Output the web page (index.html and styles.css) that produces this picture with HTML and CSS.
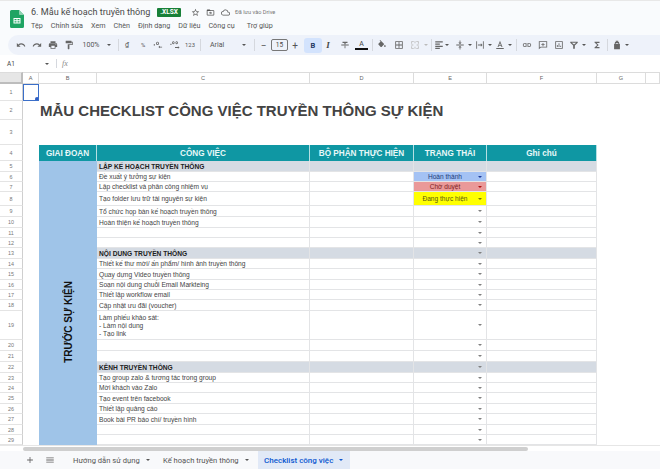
FILE: index.html
```html
<!DOCTYPE html>
<html lang="vi">
<head>
  <meta charset="UTF-8">
  <meta name="viewport" content="width=device-width, initial-scale=1.0">
  <title>6. Mẫu kế hoạch truyền thông</title>
  <link rel="stylesheet" href="styles.css">
</head>
<body>
  <svg class="sprite" aria-hidden="true">
    <symbol id="i-undo" viewBox="0 0 24 24"><path d="M12.5 8c-2.65 0-5.05.99-6.9 2.6L2 7v9h9l-3.62-3.62c1.39-1.16 3.16-1.88 5.12-1.88 3.54 0 6.55 2.31 7.6 5.5l2.37-.78C21.08 11.03 17.15 8 12.5 8z"/></symbol>
    <symbol id="i-redo" viewBox="0 0 24 24"><path d="M18.4 10.6C16.55 8.99 14.15 8 11.5 8c-4.65 0-8.58 3.03-9.96 7.22L3.9 16c1.05-3.19 4.05-5.5 7.6-5.5 1.95 0 3.73.72 5.12 1.88L13 16h9V7l-3.6 3.6z"/></symbol>
    <symbol id="i-print" viewBox="0 0 24 24"><path d="M19 8H5c-1.66 0-3 1.34-3 3v6h4v4h12v-4h4v-6c0-1.66-1.34-3-3-3zm-3 11H8v-5h8v5zm3-7c-.55 0-1-.45-1-1s.45-1 1-1 1 .45 1 1-.45 1-1 1zm-1-9H6v4h12V3z"/></symbol>
    <symbol id="i-paint" viewBox="0 0 24 24"><path d="M18 4V3c0-.55-.45-1-1-1H5c-.55 0-1 .45-1 1v4c0 .55.45 1 1 1h12c.55 0 1-.45 1-1V6h1v4H9v11c0 .55.45 1 1 1h2c.55 0 1-.45 1-1v-9h8V4h-3z"/></symbol>
    <symbol id="i-star" viewBox="0 0 24 24"><path d="M22 9.24l-7.19-.62L12 2 9.19 8.63 2 9.24l5.46 4.73L5.82 21 12 17.27 18.18 21l-1.63-7.03L22 9.24zM12 15.4l-3.76 2.27 1-4.28-3.32-2.88 4.38-.38L12 6.1l1.71 4.04 4.38.38-3.32 2.88 1 4.28L12 15.4z"/></symbol>
    <symbol id="i-folder" viewBox="0 0 24 24"><path d="M20 6h-8l-2-2H4c-1.1 0-2 .9-2 2v12c0 1.1.9 2 2 2h16c1.1 0 2-.9 2-2V8c0-1.1-.9-2-2-2zm0 12H4V8h16v10zM12 9.5l4 3.5-4 3.5V14H8v-2h4V9.5z"/></symbol>
    <symbol id="i-cloud" viewBox="0 0 24 24"><path d="M19.35 10.04C18.67 6.59 15.64 4 12 4 9.11 4 6.6 5.64 5.35 8.04 2.34 8.36 0 10.91 0 14c0 3.31 2.69 6 6 6h13c2.76 0 5-2.24 5-5 0-2.64-2.05-4.78-4.65-4.96zM19 18H6c-2.21 0-4-1.79-4-4s1.79-4 4-4h.71C7.37 7.69 9.48 6 12 6c3.04 0 5.5 2.46 5.5 5.5v.5H19c1.66 0 3 1.34 3 3s-1.34 3-3 3z"/></symbol>
    <symbol id="i-dec-less" viewBox="0 0 24 24"><path d="M3 10h3v3H3zM12 4a3.5 4 0 1 0 .01 0zM12 6a1.5 2 0 1 1-.01 0zM14 17l4-3v2h5v2h-5v2z"/></symbol>
    <symbol id="i-dec-more" viewBox="0 0 24 24"><path d="M1 9h2.500v3H1zM8 3a3 3.500 0 1 0 .01 0zM8 5a1 1.500 0 1 1-.01 0zM16 3a3 3.500 0 1 0 .01 0zM16 5a1 1.500 0 1 1-.01 0zM23 18l-4-3v2h-7v2h7v2z"/></symbol>
    <symbol id="i-strike" viewBox="0 0 24 24"><path d="M3 11h18v2H3zM11 14h2v6h-2zM6 4h12v3h-4.500v3h-3V7H6z"/></symbol>
    <symbol id="i-fill" viewBox="0 0 24 24"><path d="M16.560 8.940 7.620 0 6.210 1.410l2.380 2.380-5.150 5.150c-.590.590-.590 1.540 0 2.120l5.500 5.500c.290.290.680.440 1.060.440s.770-.150 1.060-.440l5.500-5.500c.590-.580.590-1.530 0-2.120zM19 11.500s-2 2.170-2 3.500c0 1.100.900 2 2 2s2-.900 2-2c0-1.330-2-3.500-2-3.500z"/></symbol>
    <symbol id="i-borders" viewBox="0 0 24 24"><path d="M3 3v18h18V3H3zm8 16H5v-6h6v6zm0-8H5V5h6v6zm8 8h-6v-6h6v6zm0-8h-6V5h6v6z"/></symbol>
    <symbol id="i-merge" viewBox="0 0 24 24"><path d="M3 3h6v2H5v4H3zM15 3h6v6h-2V5h-4zM3 15h2v4h4v2H3zM19 15h2v6h-6v-2h4zM11 3h2v5h-2zM11 16h2v5h-2zM3 11h5v2H3zM16 11h5v2h-5z"/></symbol>
    <symbol id="i-align" viewBox="0 0 24 24"><path d="M3 3h18v3H3zM3 8.500h11v3H3zM3 13.500h18v3H3zM3 18.500h11v3H3z"/></symbol>
    <symbol id="i-valign" viewBox="0 0 24 24"><path d="M3 11h18v2H3zM8 6h3V1h2v5h3l-4 4zM8 18h3v5h2v-5h3l-4-4z"/></symbol>
    <symbol id="i-wrap" viewBox="0 0 24 24"><path d="M3 3h2v18H3zM19 3h2v18h-2zM7 11h7V8l4 4-4 4v-3H7z"/></symbol>
    <symbol id="i-rotate" viewBox="0 0 24 24"><path d="M12 2 6 17h2.300l1.200-3h5l1.200 3H18L12 2zm-1.700 10L12 7l1.700 5h-3.400zM3 19h18v2.500H3z"/></symbol>
    <symbol id="i-link" viewBox="0 0 24 24"><path d="M3.900 12c0-1.710 1.390-3.100 3.100-3.100h4V7H7c-2.760 0-5 2.240-5 5s2.240 5 5 5h4v-1.900H7c-1.710 0-3.100-1.390-3.100-3.100zM8 13h8v-2H8v2zm9-6h-4v1.900h4c1.710 0 3.100 1.390 3.100 3.100s-1.390 3.100-3.100 3.100h-4V17h4c2.760 0 5-2.240 5-5s-2.240-5-5-5z"/></symbol>
    <symbol id="i-comment" viewBox="0 0 24 24"><path d="M2 3h20v15H7l-5 4V3zm2 2v12.800L6.300 16H20V5H4zm7 2h2v3h3v2h-3v3h-2v-3H8v-2h3z"/></symbol>
    <symbol id="i-chart" viewBox="0 0 24 24"><path d="M3 3h18v18H3V3zm2 2v14h14V5H5zm2 7h2v5H7zm4-4h2v9h-2zm4 6h2v3h-2z"/></symbol>
    <symbol id="i-filter" viewBox="0 0 24 24"><path d="M3 4h18v2.500L14 13v8h-4v-8L3 6.500V4zm3.800 2.500L12 11l5.200-4.500H6.800z"/></symbol>
    <symbol id="i-sigma" viewBox="0 0 24 24"><path d="M18 4H6v2l6.500 6L6 18v2h12v-3h-7l5-5-5-5h7z"/></symbol>
    <symbol id="i-lock" viewBox="0 0 24 24"><path d="M9 2h6v3h2v4h2v13H5V9h2V5h2V2zm2 2v1h2V4h-2zm-2 3v2h6V7H9z"/></symbol>
    <symbol id="i-plus" viewBox="0 0 24 24"><path d="M19 13h-6v6h-2v-6H5v-2h6V5h2v6h6v2z"/></symbol>
    <symbol id="i-menu" viewBox="0 0 24 24"><path d="M3 6h18v2H3zM3 11h18v2H3zM3 16h18v2H3z"/></symbol>
  </svg>

  <header class="titlebar">
    <svg class="logo" viewBox="0 0 14 18">
      <path d="M1.500 0H9l5 5v11.500a1.500 1.500 0 0 1-1.500 1.500h-11A1.500 1.500 0 0 1 0 16.500v-15A1.500 1.500 0 0 1 1.500 0z" fill="#1fa463"/>
      <path d="M9 0l5 5H10a1 1 0 0 1-1-1z" fill="#8ed1b1"/>
      <path d="M3.500 8h7v5.500h-7zM4.500 9v1.200h2V9zm3 0v1.200h2V9zm-3 2.200v1.300h2v-1.300zm3 0v1.300h2v-1.300z" fill="#fff" fill-rule="evenodd"/>
    </svg>
    <div class="titlebar-main">
      <div class="doc-row">
        <span class="doc-name">6. Mẫu kế hoạch truyền thông</span>
        <span class="badge">.XLSX</span>
        <svg class="doc-icon star"><use href="#i-star"/></svg>
        <svg class="doc-icon"><use href="#i-folder"/></svg>
        <svg class="doc-icon"><use href="#i-cloud"/></svg>
        <span class="saved">Đã lưu vào Drive</span>
      </div>
      <nav class="menu">
        <span>Tệp</span><span>Chỉnh sửa</span><span>Xem</span><span>Chèn</span><span>Định dạng</span><span>Dữ liệu</span><span class="tools">Công cụ</span><span>Trợ giúp</span>
      </nav>
    </div>
  </header>

  <div class="toolbar">
    <svg class="tb"><use href="#i-undo"/></svg>
    <svg class="tb"><use href="#i-redo"/></svg>
    <svg class="tb"><use href="#i-print"/></svg>
    <svg class="tb"><use href="#i-paint"/></svg>
    <span class="tb-text zoom-val">100%</span><i class="caret"></i>
    <i class="sep sep-zoom"></i>
    <span class="tb-text cell16">₫</span>
    <span class="tb-text cell16 small">%</span>
    <svg class="tb w13"><use href="#i-dec-less"/></svg>
    <svg class="tb w18 ml2"><use href="#i-dec-more"/></svg>
    <span class="tb-text small w12">123</span>
    <i class="sep sep-num"></i>
    <span class="tb-text font-name">Arial</span><i class="caret"></i>
    <i class="sep sep-font"></i>
    <span class="tb-text step-minus">−</span>
    <span class="size-box">15</span>
    <span class="tb-text step-plus">+</span>
    <span class="bold-btn">B</span>
    <span class="italic-btn">I</span>
    <svg class="tb ml3"><use href="#i-strike"/></svg>
    <span class="text-color">A</span>
    <i class="sep sep-num"></i>
    <svg class="tb w10"><use href="#i-fill"/></svg>
    <svg class="tb ml4"><use href="#i-borders"/></svg>
    <svg class="tb faint"><use href="#i-merge"/></svg><i class="caret faint-caret"></i>
    <i class="sep sep-tight"></i>
    <svg class="tb w10"><use href="#i-align"/></svg><i class="caret"></i>
    <svg class="tb w14 ml3"><use href="#i-valign"/></svg><i class="caret"></i>
    <svg class="tb w14"><use href="#i-wrap"/></svg><i class="caret"></i>
    <svg class="tb w14"><use href="#i-rotate"/></svg><i class="caret"></i>
    <i class="sep sep-align"></i>
    <svg class="tb w14"><use href="#i-link"/></svg>
    <svg class="tb ml1"><use href="#i-comment"/></svg>
    <svg class="tb"><use href="#i-chart"/></svg>
    <svg class="tb w14"><use href="#i-filter"/></svg><i class="caret"></i>
    <svg class="tb ml2"><use href="#i-sigma"/></svg>
    <i class="sep sep-tight"></i>
    <svg class="tb w14"><use href="#i-lock"/></svg><i class="caret"></i>
  </div>

  <div class="formula-bar">
    <span class="name-box">A1</span><i class="caret"></i>
    <i class="sep"></i>
    <span class="fx">fx</span>
  </div>

  <div class="sheet">
    <table>
      <colgroup>
        <col class="c-head"><col class="c-a"><col class="c-b"><col class="c-c"><col class="c-d"><col class="c-e"><col class="c-f"><col class="c-g"><col class="c-h">
      </colgroup>
      <tr class="col-heads">
        <th class="corner"></th><th>A</th><th>B</th><th>C</th><th>D</th><th>E</th><th>F</th><th>G</th><th></th>
      </tr>
      <tr class="h17"><th class="rh">1</th><td class="selected"></td><td colspan="7"></td></tr>
      <tr class="h19"><th class="rh">2</th><td></td><td colspan="7" class="title">MẪU CHECKLIST CÔNG VIỆC TRUYỀN THÔNG SỰ KIỆN</td></tr>
      <tr class="h25"><th class="rh">3</th><td colspan="8"></td></tr>
      <tr class="h16 heading">
        <th class="rh">4</th><td class="blank"></td>
        <td>GIAI ĐOẠN</td><td>CÔNG VIỆC</td><td>BỘ PHẬN THỰC HIỆN</td><td>TRẠNG THÁI</td><td>Ghi chú</td>
        <td class="blank" colspan="2"></td>
      </tr>
      <tr class="h11 section">
        <th class="rh">5</th><td class="blank"></td>
        <td class="phase" rowspan="25"><span>TRƯỚC SỰ KIỆN</span></td>
        <td class="job">LẬP KẾ HOẠCH TRUYỀN THÔNG</td><td></td><td></td><td></td><td class="blank" colspan="2"></td>
      </tr>
      <tr class="h10"><th class="rh">6</th><td class="blank"></td><td class="job">Đề xuất ý tưởng sự kiện</td><td></td><td class="st done"><div class="pick"><span>Hoàn thành</span></div></td><td></td><td class="blank" colspan="2"></td></tr>
      <tr class="h10"><th class="rh">7</th><td class="blank"></td><td class="job">Lập checklist và phân công nhiệm vụ</td><td></td><td class="st wait"><div class="pick"><span>Chờ duyệt</span></div></td><td></td><td class="blank" colspan="2"></td></tr>
      <tr class="h14"><th class="rh">8</th><td class="blank"></td><td class="job">Tạo folder lưu trữ tài nguyên sự kiện</td><td></td><td class="st doing"><div class="pick"><span>Đang thực hiện</span></div></td><td></td><td class="blank" colspan="2"></td></tr>
      <tr class="h11"><th class="rh">9</th><td class="blank"></td><td class="job">Tổ chức họp bàn kế hoạch truyền thông</td><td></td><td class="st"><div class="pick"></div></td><td></td><td class="blank" colspan="2"></td></tr>
      <tr class="h11"><th class="rh">10</th><td class="blank"></td><td class="job">Hoàn thiện kế hoạch truyền thông</td><td></td><td class="st"><div class="pick"></div></td><td></td><td class="blank" colspan="2"></td></tr>
      <tr class="h10"><th class="rh">11</th><td class="blank"></td><td class="job"></td><td></td><td class="st"><div class="pick"></div></td><td></td><td class="blank" colspan="2"></td></tr>
      <tr class="h10"><th class="rh">12</th><td class="blank"></td><td class="job"></td><td></td><td class="st"><div class="pick"></div></td><td></td><td class="blank" colspan="2"></td></tr>
      <tr class="h11 section"><th class="rh">13</th><td class="blank"></td><td class="job">NỘI DUNG TRUYỀN THÔNG</td><td></td><td class="st"><div class="pick"></div></td><td></td><td class="blank" colspan="2"></td></tr>
      <tr class="h10"><th class="rh">14</th><td class="blank"></td><td class="job">Thiết kế thư mời/ ấn phẩm/ hình ảnh truyền thông</td><td></td><td class="st"><div class="pick"></div></td><td></td><td class="blank" colspan="2"></td></tr>
      <tr class="h11"><th class="rh">15</th><td class="blank"></td><td class="job">Quay dựng Video truyền thông</td><td></td><td class="st"><div class="pick"></div></td><td></td><td class="blank" colspan="2"></td></tr>
      <tr class="h10"><th class="rh">16</th><td class="blank"></td><td class="job">Soạn nội dung chuỗi Email Markteing</td><td></td><td class="st"><div class="pick"></div></td><td></td><td class="blank" colspan="2"></td></tr>
      <tr class="h10"><th class="rh">17</th><td class="blank"></td><td class="job">Thiết lập workflow email</td><td></td><td class="st"><div class="pick"></div></td><td></td><td class="blank" colspan="2"></td></tr>
      <tr class="h11"><th class="rh">18</th><td class="blank"></td><td class="job">Cập nhật ưu đãi (voucher)</td><td></td><td class="st"><div class="pick"></div></td><td></td><td class="blank" colspan="2"></td></tr>
      <tr class="h29"><th class="rh">19</th><td class="blank"></td><td class="job multi">Làm phiếu khảo sát:<br>- Làm nội dung<br>- Tạo link</td><td></td><td class="st"><div class="pick"></div></td><td></td><td class="blank" colspan="2"></td></tr>
      <tr class="h11"><th class="rh">20</th><td class="blank"></td><td class="job"></td><td></td><td class="st"><div class="pick"></div></td><td></td><td class="blank" colspan="2"></td></tr>
      <tr class="h11"><th class="rh">21</th><td class="blank"></td><td class="job"></td><td></td><td class="st"><div class="pick"></div></td><td></td><td class="blank" colspan="2"></td></tr>
      <tr class="h11 section"><th class="rh">22</th><td class="blank"></td><td class="job">KÊNH TRUYỀN THÔNG</td><td></td><td class="st"><div class="pick"></div></td><td></td><td class="blank" colspan="2"></td></tr>
      <tr class="h10"><th class="rh">23</th><td class="blank"></td><td class="job">Tạo group zalo &amp; tương tác trong group</td><td></td><td class="st"><div class="pick"></div></td><td></td><td class="blank" colspan="2"></td></tr>
      <tr class="h10"><th class="rh">24</th><td class="blank"></td><td class="job">Mời khách vào Zalo</td><td></td><td class="st"><div class="pick"></div></td><td></td><td class="blank" colspan="2"></td></tr>
      <tr class="h11"><th class="rh">25</th><td class="blank"></td><td class="job">Tạo event trên facebook</td><td></td><td class="st"><div class="pick"></div></td><td></td><td class="blank" colspan="2"></td></tr>
      <tr class="h10"><th class="rh">26</th><td class="blank"></td><td class="job">Thiết lập quảng cáo</td><td></td><td class="st"><div class="pick"></div></td><td></td><td class="blank" colspan="2"></td></tr>
      <tr class="h11"><th class="rh">27</th><td class="blank"></td><td class="job">Book bài PR báo chí/ truyền hình</td><td></td><td class="st"><div class="pick"></div></td><td></td><td class="blank" colspan="2"></td></tr>
      <tr class="h10"><th class="rh">28</th><td class="blank"></td><td class="job"></td><td></td><td class="st"><div class="pick"></div></td><td></td><td class="blank" colspan="2"></td></tr>
      <tr class="h10"><th class="rh">29</th><td class="blank"></td><td class="job"></td><td></td><td class="st"><div class="pick"></div></td><td></td><td class="blank" colspan="2"></td></tr>
    </table>
  </div>

  <div class="scroll-row"><div class="scroll-thumb"></div></div>

  <footer class="tabs">
    <svg class="tab-icon"><use href="#i-plus"/></svg>
    <svg class="tab-icon"><use href="#i-menu"/></svg>
    <div class="tab tab-1">Hướng dẫn sử dụng<i class="caret"></i></div>
    <div class="tab tab-2">Kế hoạch truyền thông<i class="caret"></i></div>
    <div class="tab active">Checklist công việc<i class="caret"></i></div>
  </footer>
</body>
</html>
```

FILE: styles.css
```css
* {
  box-sizing: border-box;
}
html, body {
  margin: 0;
  padding: 0;
}
body {
  width: 660px;
  height: 469px;
  overflow: hidden;
  background-color: #f9fbfd;
  font-family: Roboto, "Liberation Sans", sans-serif;
  color: #444746;
}
.sprite {
  display: none;
}

/* title */
.titlebar {
  display: flex;
  height: 35px;
  padding: 3px 0 0 10px;
  border-top: 1px solid #e8e8e8;
}
.logo {
  width: 14px;
  height: 18px;
  margin-top: 6px;
}
.titlebar-main {
  margin-left: 7px;
}
.doc-row {
  display: flex;
  align-items: center;
  height: 16px;
}
.doc-name {
  width: 126px;
  font-size: 9.1px;
  white-space: nowrap;
  color: #4a4a4a;
}
.badge {
  width: 24px;
  height: 9px;
  font-size: 6.5px;
  font-weight: 700;
  line-height: 9px;
  text-align: center;
  color: #fff;
  background-color: #188038;
  border-radius: 1px;
}
.doc-icon {
  width: 9px;
  height: 9px;
  margin-left: 6px;
  fill: #555;
}
.doc-icon.star {
  margin-left: 10px;
}
.saved {
  margin-left: 5px;
  font-size: 5.6px;
  color: #777;
}
.menu {
  display: flex;
  gap: 8px;
  margin-top: 1px;
  font-size: 7.2px;
  color: #555;
  white-space: nowrap;
}
.menu .tools {
  margin-right: 4px;
}

/* toolbar */
.toolbar {
  display: flex;
  align-items: center;
  height: 20px;
  margin-left: 8px;
  padding-left: 5px;
  background-color: #eef2fa;
  border-radius: 10px 0 0 10px;
}
.tb {
  width: 16px;
  height: 10px;
  flex: none;
  fill: #666;
}
.tb.w10 { width: 10px; }
.tb.w13 { width: 13px; }
.tb.w14 { width: 14px; }
.tb.w18 { width: 18px; }
.ml1 { margin-left: 1px; }
.ml2 { margin-left: 2px; }
.ml3 { margin-left: 3px; }
.ml4 { margin-left: 4px; }
.tb.faint {
  fill: #bbb;
}
.tb-text {
  flex: none;
  font-size: 7px;
  color: #555;
  text-align: center;
}
.tb-text.small {
  font-size: 5.8px;
}
.cell16 {
  width: 16px;
}
.w12 {
  width: 12px;
}
.zoom-val {
  width: 20px;
  margin: 0 5px 0 4px;
}
.font-name {
  width: 36px;
  padding-left: 5px;
  text-align: left;
}
.caret {
  flex: none;
  width: 0;
  height: 0;
  margin: 0 1px;
  border-left: 2px solid transparent;
  border-right: 2px solid transparent;
  border-top: 2.500px solid #555;
}
.faint-caret {
  border-top-color: #bbb;
}
.sep {
  flex: none;
  width: 1px;
  height: 12px;
  background-color: #d5d8de;
}
.sep-zoom { margin: 0 0 0 6px; }
.sep-num { margin: 0 4px; }
.sep-font { margin: 0 4px 0 7px; }
.sep-tight { margin: 0 2px; }
.sep-align { margin: 0 3px; }
.step-minus {
  width: 9px;
  font-size: 10px;
}
.step-plus {
  width: 14px;
  font-size: 10px;
}
.size-box {
  flex: none;
  width: 17px;
  height: 12px;
  margin-left: 3px;
  font-size: 6.5px;
  line-height: 10px;
  text-align: center;
  border: 1px solid #777;
  border-radius: 2px;
}
.bold-btn {
  flex: none;
  width: 18px;
  height: 15px;
  margin-left: 2px;
  font-size: 7.5px;
  font-weight: 700;
  line-height: 15px;
  text-align: center;
  color: #1f3763;
  background-color: #d3e3fd;
  border-radius: 3px;
}
.italic-btn {
  flex: none;
  width: 12px;
  font-family: "Liberation Serif", serif;
  font-size: 9px;
  font-style: italic;
  font-weight: 700;
  text-align: center;
}
.text-color {
  flex: none;
  width: 13px;
  margin-left: 2px;
  font-size: 7px;
  line-height: 8px;
  text-align: center;
  color: #444;
  border-bottom: 2px solid #111;
}

/* formula bar */
.formula-bar {
  display: flex;
  align-items: center;
  height: 17px;
  padding-left: 7px;
  background-color: #fff;
  font-size: 6.5px;
}
.name-box {
  width: 35px;
}
.formula-bar .caret {
  margin: 0 3px;
}
.formula-bar .sep {
  height: 9px;
  margin: 0 5px 0 4px;
}
.fx {
  font-family: "Liberation Serif", serif;
  font-style: italic;
  font-size: 8px;
  color: #888;
}

/* sheet */
.sheet {
  height: 373px;
  overflow: hidden;
  background-color: #fff;
}
table {
  width: 660px;
  table-layout: fixed;
  border-collapse: separate;
  border-spacing: 0;
  font-family: "Liberation Sans", Arial, sans-serif;
}
.c-head { width: 23px; }
.c-a { width: 16px; }
.c-b { width: 58px; }
.c-c { width: 213px; }
.c-d { width: 104px; }
.c-e { width: 73px; }
.c-f { width: 110px; }
.c-g { width: 49px; }
.c-h { width: 14px; }
td, th {
  padding: 0;
  overflow: hidden;
  white-space: nowrap;
}
.col-heads th {
  height: 12px;
  font-size: 5.6px;
  font-weight: 400;
  color: #666;
  border-top: 1px solid #dcdcdc;
  border-bottom: 1px solid #dcdcdc;
  border-right: 1px solid #dcdcdc;
}
.col-heads .corner {
  background-color: #e6e6e6;
  border-right: 2px solid #bdbdbd;
  border-bottom: 2px solid #bdbdbd;
}
.rh {
  font-size: 5.4px;
  font-weight: 400;
  color: #777;
  border-bottom: 1px solid #e4e4e4;
  border-right: 1px solid #cfcfcf;
}
.h10 td, .h10 th { height: 10px; }
.h11 td, .h11 th { height: 11px; }
.h14 td, .h14 th { height: 14px; }
.h16 td, .h16 th { height: 16px; }
.h17 td, .h17 th { height: 17px; }
.h19 td, .h19 th { height: 19px; }
.h25 td, .h25 th { height: 25px; }
.h29 td, .h29 th { height: 29px; }
.selected {
  position: relative;
  border: 1px solid #3b6fc9;
}
.selected::after {
  content: "";
  position: absolute;
  right: -1px;
  bottom: -1px;
  width: 4px;
  height: 4px;
  background-color: #2f5fc4;
  border-radius: 50%;
}
.title {
  padding: 0 0 0 1px;
  font-size: 15px;
  font-weight: 700;
  color: #434343;
  overflow: visible;
}
.heading td {
  font-size: 8.2px;
  font-weight: 700;
  text-align: center;
  color: #e8f7f8;
  background-color: #0f97a3;
  border-right: 1px solid #b5dfe3;
}
.heading td.blank {
  background-color: transparent;
  border: 0;
}
.phase {
  padding-top: 42px;
  text-align: center;
  vertical-align: middle;
  background-color: #9fc4e8;
}
.phase span {
  display: inline-block;
  writing-mode: vertical-rl;
  transform: rotate(180deg);
  font-size: 10px;
  font-weight: 700;
  color: #111;
}
tr:nth-child(n+6) td:not(.blank):not(.phase) {
  border-right: 1px solid #e3e4e6;
  border-bottom: 1px solid #e3e4e6;
}
.job {
  padding-left: 2px;
  font-size: 6.65px;
  color: #444;
}
.multi {
  line-height: 8px;
  padding-top: 2px;
}
.section td:not(.blank):not(.phase) {
  background-color: #d5dbe3;
}
.section .job {
  font-weight: 700;
  color: #222;
}
.pick {
  display: flex;
  align-items: center;
  justify-content: flex-end;
  height: 100%;
  padding-right: 4px;
  font-size: 6.6px;
}
.pick span {
  flex: 1;
  padding-right: 2px;
  text-align: center;
}
.pick::after {
  content: "";
  border-left: 2px solid transparent;
  border-right: 2px solid transparent;
  border-top: 2.500px solid #808080;
}
.st.done { background-color: #a4c2f4; color: #1c3a7a; }
.st.done .pick::after { border-top-color: #1c3a9a; }
.st.wait { background-color: #ea9999; color: #7d1d1d; }
.st.wait .pick::after { border-top-color: #b01010; }
.st.doing { background-color: #ffff00; color: #5a5a10; }
.st.doing .pick::after { border-top-color: #77770a; }

/* bottom */
.scroll-row {
  height: 6px;
  padding: 1px 0 0 23px;
  background-color: #fff;
  border-top: 1px solid #e6e6e6;
}
.scroll-thumb {
  width: 505px;
  height: 4px;
  background-color: #cfcfcf;
  border-radius: 2px;
}
.tabs {
  display: flex;
  align-items: center;
  height: 18px;
  padding-left: 25px;
  font-size: 7.6px;
  color: #555;
  background-color: #f8f9fb;
}
.tab-icon {
  width: 10px;
  height: 10px;
  margin-right: 10px;
  fill: #666;
}
.tab {
  display: flex;
  align-items: center;
  height: 18px;
  white-space: nowrap;
}
.tab .caret {
  margin-left: 6px;
}
.tab-1 {
  margin-left: 8px;
  width: 90px;
}
.tab-2 {
  width: 95px;
}
.tab.active {
  width: 92px;
  padding-left: 6px;
  font-size: 8px;
  font-weight: 500;
  color: #0b57d0;
  background-color: #e1e9f7;
}
.tab.active .caret {
  border-top-color: #0b57d0;
}
```
